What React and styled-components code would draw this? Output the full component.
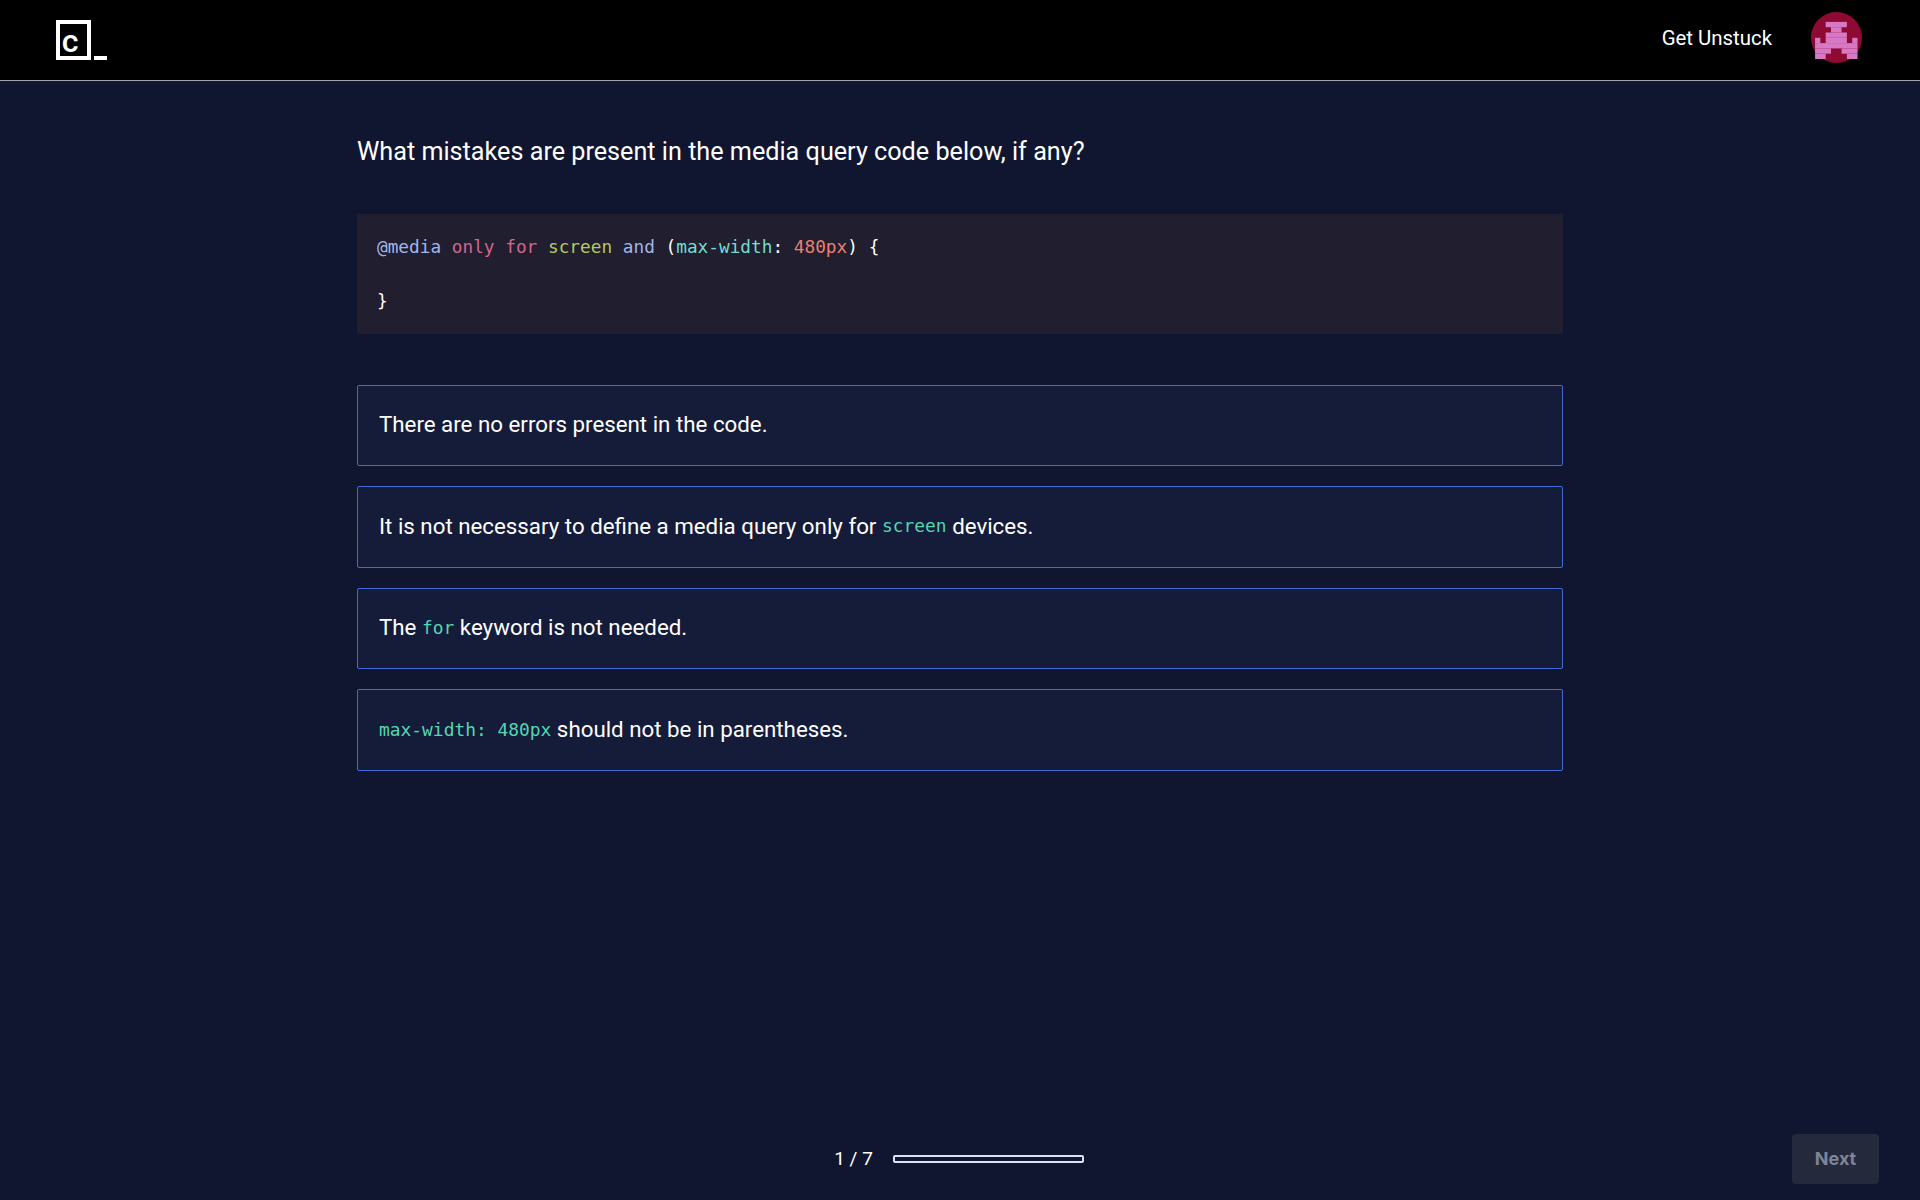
import React from "react";
import styled, { createGlobalStyle } from "styled-components";

const Global = createGlobalStyle`
  html, body { margin: 0; padding: 0; background: #10162f; }
  * { box-sizing: border-box; }
`;

const Page = styled.div`
  min-height: 1200px;
  display: flex;
  flex-direction: column;
  background: #10162f;
  color: #fff;
  font-family: "Roboto", "Liberation Sans", sans-serif;
`;

const Header = styled.header`
  height: 81px;
  flex: none;
  background: #000;
  border-bottom: 1px solid #a3a3ad;
  display: flex;
  align-items: center;
  justify-content: space-between;
  padding: 0 58px 0 56px;
`;

const Logo = styled.svg`
  display: block;
  width: 52px;
  height: 40px;
`;

const HeaderRight = styled.div`
  display: flex;
  align-items: center;
  gap: 39px;
  margin-bottom: 6px;
`;

const HeaderLink = styled.a`
  margin-top: 2px;
  font-size: 20.4px;
  color: #fff;
`;

const Avatar = styled.svg`
  display: block;
  width: 51px;
  height: 51px;
`;

const Main = styled.main`
  flex: 1;
  width: 1206px;
  margin: 0 auto;
  padding-top: 56px;
`;

const Question = styled.h1`
  margin: 0 0 47px;
  font-size: 25.2px;
  line-height: 30px;
  font-weight: 400;
`;

const CodeBlock = styled.pre`
  margin: 0 0 50.5px;
  height: 120px;
  padding: 20px;
  background: #211e2f;
  font-family: "DejaVu Sans Mono", monospace;
  font-size: 17.75px;
  line-height: 27px;
  color: #fff;
`;

const Token = styled.span`
  color: ${(p) => p.$c};
`;

const Options = styled.div`
  display: flex;
  flex-direction: column;
  gap: 20px;
`;

const Option = styled.div`
  height: 81.6px;
  display: flex;
  align-items: center;
  padding: 0 20px 2px 21px;
  background: #141c3a;
  border: 1px solid #3f6ad8;
  border-radius: 2px;
  font-size: 22.3px;
  white-space: pre;
`;

const InlineCode = styled.code`
  font-family: "DejaVu Sans Mono", monospace;
  font-size: 17.9px;
  color: #55d6b2;
`;

const Footer = styled.footer`
  flex: none;
  display: grid;
  grid-template-columns: 1fr auto 1fr;
  align-items: center;
  padding: 16px 41px;
`;

const Progress = styled.div`
  grid-column: 2;
  display: flex;
  align-items: center;
  gap: 20px;
  padding-right: 2px;
`;

const Count = styled.span`
  margin-bottom: 2px;
  font-size: 19px;
`;

const Track = styled.div`
  width: 191px;
  height: 8px;
  border: 2px solid #dfe2f5;
  border-radius: 2px;
`;

const NextButton = styled.button`
  grid-column: 3;
  justify-self: end;
  width: 87px;
  height: 50px;
  padding: 0 0 2px;
  border: 0;
  border-radius: 4px;
  background: #24293c;
  color: #7f8496;
  font-family: "Inter", "Liberation Sans", sans-serif;
  font-size: 18px;
  font-weight: 700;
`;

const cells = [
  [2, 0, 4], [3, 1, 2], [2, 2, 4], [0, 3, 1], [2, 3, 4], [7, 3, 1],
  [0, 4, 8], [0, 5, 3], [5, 5, 3], [0, 6, 2], [6, 6, 2],
];

export default function App() {
  return (
    <Page>
      <Global />
      <Header>
        <Logo viewBox="0 0 52 40">
          <rect x="2" y="2" width="31" height="36" fill="none" stroke="#fff" strokeWidth="4" />
          <text x="14" y="31.7" textAnchor="middle" fontFamily="Roboto, sans-serif" fontWeight="500" fontSize="32" fill="#fff">c</text>
          <rect x="38" y="36" width="13" height="4" fill="#fff" />
        </Logo>
        <HeaderRight>
          <HeaderLink>Get Unstuck</HeaderLink>
          <Avatar viewBox="0 0 50 50">
            <circle cx="25" cy="25" r="25" fill="#8f0a33" />
            {cells.map(([x, y, w]) => (
              <rect key={`${x}-${y}`} x={4 + x * 5.2} y={9.7 + y * 5.2} width={w * 5.2} height={5.2} fill="#d678c4" />
            ))}
          </Avatar>
        </HeaderRight>
      </Header>
      <Main>
        <Question>What mistakes are present in the media query code below, if any?</Question>
        <CodeBlock>
          <Token $c="#a3b5e8">@media</Token> <Token $c="#d2658c">only</Token> <Token $c="#d2658c">for</Token>{" "}
          <Token $c="#b8c95f">screen</Token> <Token $c="#a3b5e8">and</Token> (<Token $c="#72dcd0">max-width</Token>:{" "}
          <Token $c="#e8806f">480px</Token>) {"{"}
          {"\n\n}"}
        </CodeBlock>
        <Options>
          <Option>There are no errors present in the code.</Option>
          <Option>It is not necessary to define a media query only for <InlineCode>screen</InlineCode> devices.</Option>
          <Option>The <InlineCode>for</InlineCode> keyword is not needed.</Option>
          <Option><InlineCode>max-width: 480px</InlineCode> should not be in parentheses.</Option>
        </Options>
      </Main>
      <Footer>
        <Progress>
          <Count>1 / 7</Count>
          <Track />
        </Progress>
        <NextButton>Next</NextButton>
      </Footer>
    </Page>
  );
}
